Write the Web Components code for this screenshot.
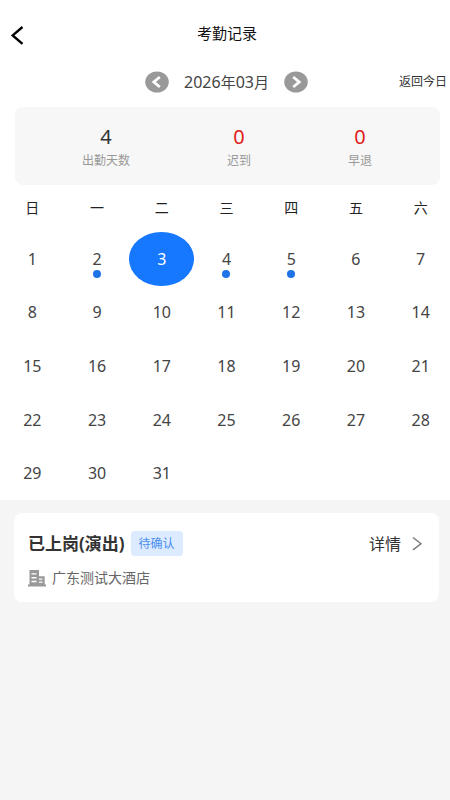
<!DOCTYPE html>
<html lang="zh-CN">
<head>
<meta charset="utf-8">
<meta name="viewport" content="width=device-width, initial-scale=1">
<title>考勤记录</title>
<style>
  html { height: 100%; }
  body {
    margin: 0;
    min-height: 100%;
    background: #f5f5f5;
    color: #333;
    font-family: "Noto Sans", "Noto Sans CJK SC", sans-serif;
    overflow-x: hidden;
  }
</style>
</head>
<body>
<attendance-page></attendance-page>

<script>
const base = `
  *, *::before { box-sizing: border-box; }
  button, a { margin: 0; padding: 0; border: 0; background: none; font: inherit; color: inherit; text-decoration: none; cursor: pointer; }
  svg { display: block; }
`;
const define = (name, html, setup) => customElements.define(name, class extends HTMLElement {
  connectedCallback() {
    if (this.shadowRoot) return;
    const root = this.attachShadow({ mode: 'open' });
    const template = document.createElement('template');
    template.innerHTML = html;
    root.append(template.content.cloneNode(true));
    if (setup) setup(this, root);
  }
});

define('page-header', `
  <style>${base}
    :host { display: grid; grid-template-columns: 48px 1fr 48px; align-items: center; height: 68px; color: #111; }
    button { display: flex; align-items: center; height: 48px; padding: 2px 0 0 10px; }
    h1 { margin: 0; text-align: center; font-size: 15px; line-height: 20px; font-weight: 400; padding: 0 0 2px 4px; }
  </style>
  <button type="button" aria-label="返回">
    <svg width="14" height="20" viewBox="0 0 14 20" fill="none" stroke="#000" stroke-width="2.4"><path d="M12.5 2 2.7 10.4 12.5 18.8"/></svg>
  </button>
  <h1><slot></slot></h1>
`);

define('month-switcher', `
  <style>${base}
    :host { display: grid; grid-template-columns: 1fr auto 1fr; align-items: center; height: 28px; padding-right: 3px; color: #444; }
    .months { grid-column: 2; display: flex; align-items: center; gap: 15px; padding-left: 6px; }
    .label { font-size: 16px; line-height: 24px; }
    .label span { font-size: 15px; }
    .today { justify-self: end; font-size: 12px; line-height: 20px; white-space: nowrap; color: #333; }
  </style>
  <div class="months">
    <button type="button" aria-label="上个月">
      <svg width="24" height="22" viewBox="0 0 24 22"><ellipse cx="12" cy="11" rx="11.8" ry="10.6" fill="#999"/><path d="M14.8 6 8.8 11l6 5" fill="none" stroke="#fff" stroke-width="2.8"/></svg>
    </button>
    <div class="label">2026<span>年</span>03<span>月</span></div>
    <button type="button" aria-label="下个月">
      <svg width="24" height="22" viewBox="0 0 24 22"><ellipse cx="12" cy="11" rx="11.8" ry="10.6" fill="#999"/><path d="M9.2 6l6 5-6 5" fill="none" stroke="#fff" stroke-width="2.8"/></svg>
    </button>
  </div>
  <button type="button" class="today">返回今日</button>
`);

define('summary-stat', `
  <style>${base}
    :host { display: flex; flex-direction: column; align-items: center; color: #333; }
    :host([alert]) { color: #e02020; }
    .value { font-size: 20px; line-height: 28px; }
    .label { font-size: 12px; line-height: 20px; color: #999; }
  </style>
  <div class="value"><slot></slot></div>
  <div class="label"><slot name="label"></slot></div>
`);

define('attendance-summary', `
  <style>${base}
    :host { display: flex; justify-content: space-between; margin: 11px 10px 0 15px; padding: 16px 68px 14px 67px; border-radius: 8px; background: #f7f7f7; }
  </style>
  <slot></slot>
`);

define('calendar-day', `
  <style>${base}
    :host { display: block; }
    button { position: relative; display: block; width: 100%; height: 100%; font-size: 16px; line-height: 24px; color: #444; }
    :host([selected]) button { border-radius: 50%; background: #1677ff; color: #fff; }
    :host([marked]) button::before { content: ""; position: absolute; left: 50%; bottom: 8px; width: 8px; height: 8px; margin-left: -4px; border-radius: 50%; background: #1f73e8; }
  </style>
  <button type="button"><slot></slot></button>
`, (host, root) => {
  root.querySelector('button').setAttribute('aria-pressed', host.hasAttribute('selected'));
});

define('month-calendar', `
  <style>${base}
    :host { display: block; margin-right: -3px; }
    .week, .days { display: grid; grid-template-columns: repeat(7, 1fr); }
    .week { height: 47px; align-items: center; text-align: center; padding-bottom: 2px; font-size: 14px; line-height: 20px; color: #222; }
    .days { grid-template-rows: repeat(5, 1fr); min-height: 268px; }
  </style>
  <div class="week"></div>
  <div class="days"></div>
`, (host, root) => {
  root.querySelector('.week').innerHTML = [...'日一二三四五六'].map(d => `<span>${d}</span>`).join('');
  const marked = [2, 4, 5];
  root.querySelector('.days').innerHTML = Array.from({ length: 31 }, (_, i) => {
    const d = i + 1;
    return `<calendar-day${d === 3 ? ' selected' : ''}${marked.includes(d) ? ' marked' : ''}>${d}</calendar-day>`;
  }).join('');
});

define('shift-card', `
  <style>${base}
    :host { display: block; margin: 13px 11px 0 14px; padding: 18px 16px 13px 14px; border-radius: 8px; background: #fff; }
    .top, .place, a { display: flex; align-items: center; }
    h2 { margin: 0; font-size: 17px; line-height: 25px; font-weight: 700; }
    .badge { margin-left: 6px; padding: 0 8px; border-radius: 4px; background: #dcebff; color: #4a8df0; font-size: 12px; line-height: 25px; }
    a { margin-left: auto; gap: 10px; font-size: 16px; line-height: 24px; }
    .place { margin-top: 11px; gap: 6px; font-size: 14px; line-height: 22px; color: #666; }
  </style>
  <div class="top">
    <h2><slot></slot></h2>
    <span class="badge"><slot name="status"></slot></span>
    <a href="#detail">详情
      <svg width="12" height="16" viewBox="0 0 12 16" fill="none" stroke="#777" stroke-width="1.4"><path d="M2 1.500l8 6.200L2 13.900"/></svg>
    </a>
  </div>
  <div class="place">
    <svg width="18" height="18" viewBox="0 0 18 18" fill="#999">
      <path fill-rule="evenodd" d="M1.500 1h9.500v6.300h5.700v8.200H18V17.500H0v-2h1.500zM3.500 4.200v1.400h5V4.200zm0 3.800v1.400h5V8zm0 3.800v1.400h5V11.800zM11 9.500v1.300h3.500V9.500zm0 3v1.300h3.500V12.500z"/>
    </svg>
    <slot name="place"></slot>
  </div>
`);

define('attendance-page', `
  <style>${base}
    :host { display: block; overflow-x: hidden; }
    .top { background: #fff; }
  </style>
  <div class="top">
    <page-header>考勤记录</page-header>
    <month-switcher></month-switcher>
    <attendance-summary>
      <summary-stat>4<span slot="label">出勤天数</span></summary-stat>
      <summary-stat alert>0<span slot="label">迟到</span></summary-stat>
      <summary-stat alert>0<span slot="label">早退</span></summary-stat>
    </attendance-summary>
    <month-calendar></month-calendar>
  </div>
  <shift-card>已上岗(演出)<span slot="status">待确认</span><span slot="place">广东测试大酒店</span></shift-card>
`);
</script>
</body>
</html>
